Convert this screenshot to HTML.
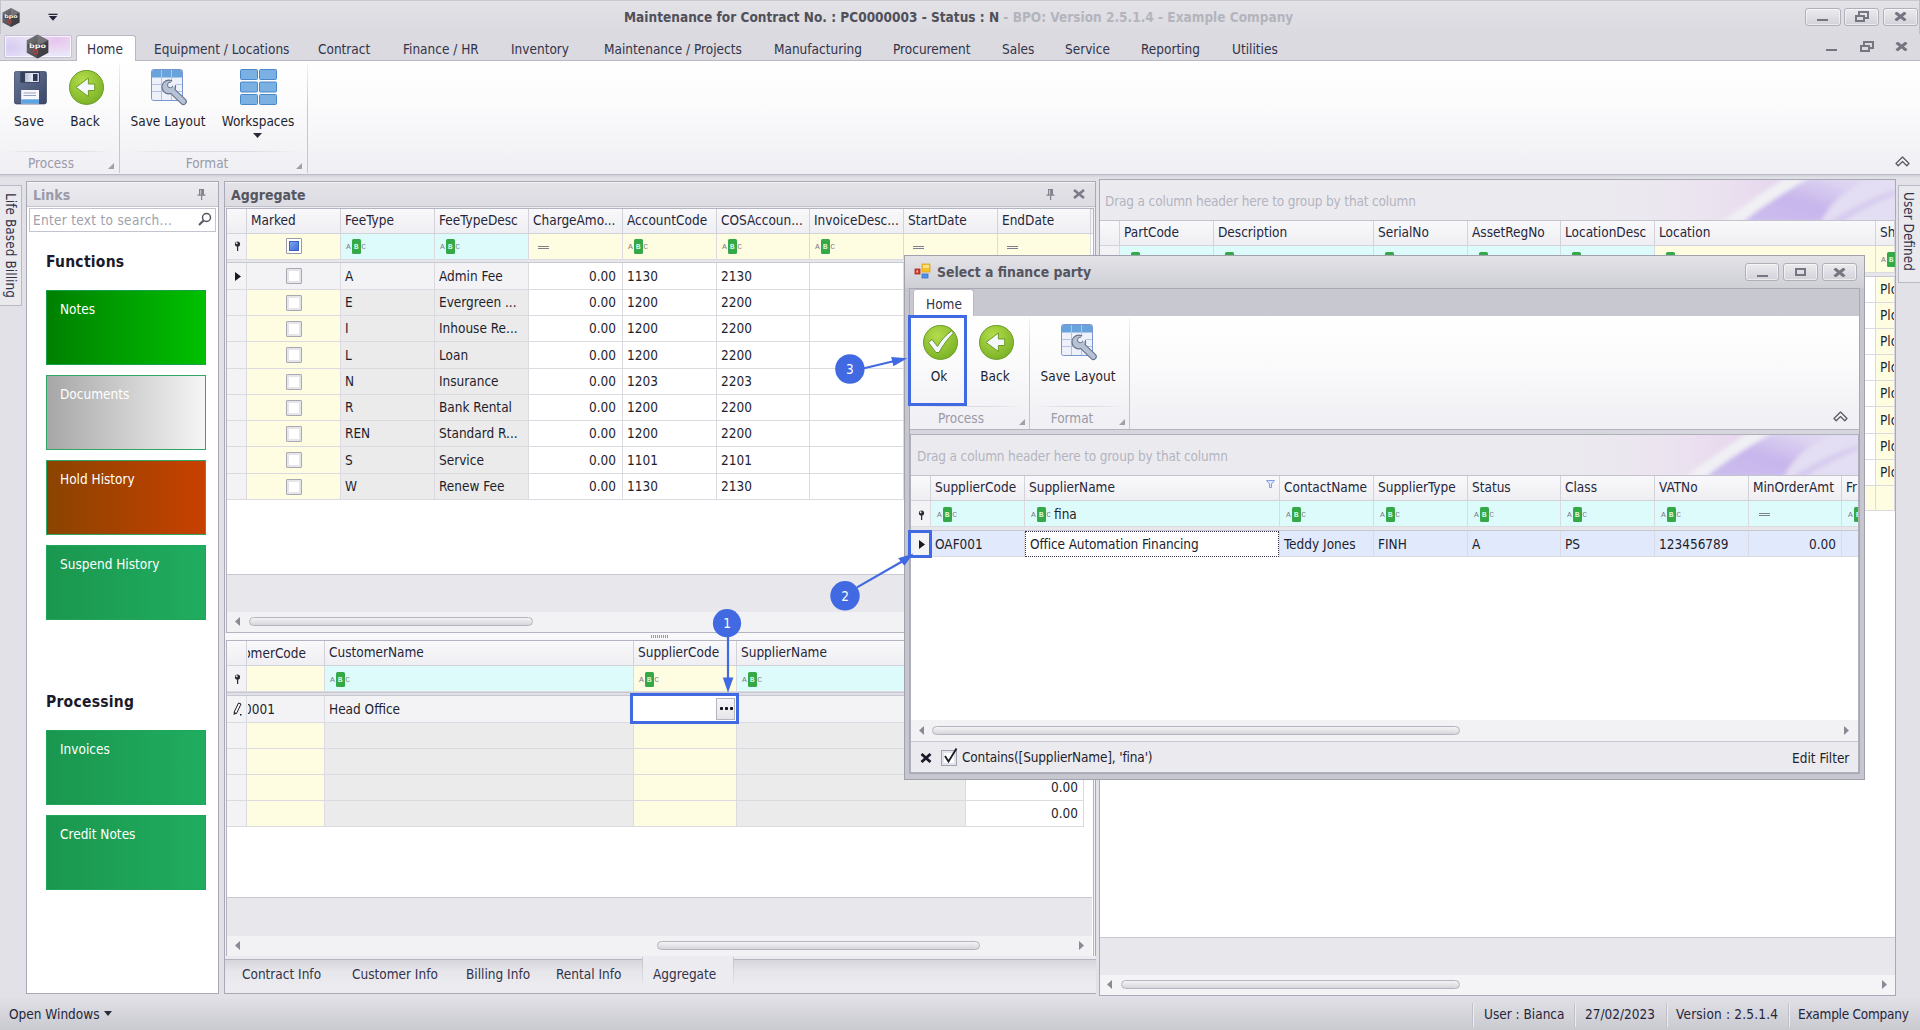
<!DOCTYPE html><html><head><meta charset="utf-8"><title>Maintenance for Contract</title><style>
*{box-sizing:border-box;margin:0;padding:0}
html,body{width:1920px;height:1030px;overflow:hidden;background:#e3e3e8}
body{font-family:"DejaVu Sans Condensed","Liberation Sans",sans-serif;font-size:13.5px;color:#1e1e2d;position:relative}
.a{position:absolute}
.t{position:absolute;white-space:nowrap;line-height:16px}
.hdr{position:absolute;background:linear-gradient(#f9f9fb,#efeff3);border-right:1px solid #d2d2da;border-bottom:1px solid #d2d2da;white-space:nowrap;overflow:hidden;padding-left:4px;color:#26263a}
.c{position:absolute;white-space:nowrap;overflow:hidden;padding-left:4px;border-right:1px solid #dadae0;border-bottom:1px solid #dadae0}
.r{text-align:right;padding-right:9px;padding-left:0}
.cy{background:#defbfc}
.ye{background:#fffde1}
.gr{background:#ebebeb}
.wh{background:#fff}
.ind{background:#f3f3f6}
.abc{position:absolute;font-family:"Liberation Mono",monospace;font-size:8px;font-weight:normal;color:#7e7e88;line-height:10px;white-space:nowrap;letter-spacing:-.4px}
.abc b{background:#35a847;color:#d8f6dc;border-radius:1.5px;padding:3px 2px 3px 1.8px;margin:0 .8px 0 1.5px;letter-spacing:0}
.eq{position:absolute;width:11px;height:3px;border-top:1px solid #80808c;border-bottom:1px solid #80808c}
.cb{position:absolute;width:16px;height:16px;border:1px solid #a9a9b4;background:#fff;box-shadow:inset 0 0 0 2px #e6e6ea;border-radius:1px}
.tile{position:absolute;left:46px;width:160px;height:75px;color:#fff;padding:10px 0 0 13px;font-size:13.5px}
.wbtn{position:absolute;top:8px;width:35px;height:18px;border:1px solid #b0b0ba;border-radius:3px;background:linear-gradient(#ebebef,#d2d2d9);box-shadow:inset 0 0 0 1px rgba(255,255,255,.55)}
.sb{position:absolute;height:9px;border:1px solid #b4b4be;border-radius:5px;background:linear-gradient(#f4f4f6,#d6d6dc)}
</style></head><body>
<div class="a" style="left:0px;top:0px;width:1920px;height:34px;background:linear-gradient(#e2e2e7,#dadae0)"></div>
<div class="a" style="left:0px;top:0px;width:1920px;height:1px;background:#c9c9d1"></div>
<svg class="a" style="left:2px;top:7px" width="18" height="21" viewBox="0 0 20 22"><defs><linearGradient id="hx1" x1="0" y1="0" x2="1" y2="1"><stop offset="0" stop-color="#7c7c80"/><stop offset=".5" stop-color="#58585c"/><stop offset="1" stop-color="#444448"/></linearGradient></defs><polygon points="10,0.500 19.500,5.500 19.500,16.500 10,21.500 0.500,16.500 0.500,5.500" fill="url(#hx1)"/><polygon points="10,0.500 19.500,5.500 10,11 " fill="#8a8a8e" opacity=".55"/><polygon points="10,11 19.500,5.500 19.500,16.500 10,21.500" fill="#2e2e32" opacity=".45"/><rect x="1.500" y="8.600" width="17" height="3.600" fill="#3a3a3e" opacity=".7"/><text x="10" y="12" text-anchor="middle" font-family="DejaVu Sans, Liberation Sans, sans-serif" font-weight="bold" font-size="5.5" fill="#f2f2f4" textLength="15" lengthAdjust="spacingAndGlyphs">bpo</text><circle cx="8.200" cy="15.600" r="1.900" fill="none" stroke="#c43a36" stroke-width="1.100"/></svg>
<svg class="a" style="left:48px;top:13px" width="10" height="8" viewBox="0 0 10 8"><rect x="0.500" y="0.700" width="9" height="1.300" fill="#24243a"/><polygon points="0.800,3 9.200,3 5,7.800" fill="#24243a"/></svg>
<div class="a" style="left:0px;top:0px;width:1px;height:34px;background:#c4c4cc"></div>
<div class="t" style="left:624px;top:9px;font-weight:bold;font-size:13.5px;line-height:17px;color:#50505a;letter-spacing:.02px">Maintenance for Contract No. : PC0000003 - Status : N<span style="color:#b4b4bd"> - BPO: Version 2.5.1.4 - Example Company</span></div>
<div class="wbtn" style="left:1805px;width:36px"></div>
<div class="wbtn" style="left:1844px;width:35px"></div>
<div class="wbtn" style="left:1883px;width:35px"></div>
<div class="a" style="left:1817px;top:19px;width:11px;height:2px;background:#767682"></div>
<svg class="a" style="left:1855px;top:11px" width="14" height="11" viewBox="0 0 14 11"><rect x="4" y="1" width="9" height="6" fill="none" stroke="#767682" stroke-width="2"/><rect x="1" y="5" width="8" height="5" fill="#dcdce2" stroke="#767682" stroke-width="2"/></svg>
<svg class="a" style="left:1894px;top:12px" width="13" height="9" viewBox="0 0 13 9"><path d="M1.500 .5L11.500 8.500M11.500 .5L1.500 8.500" stroke="#767682" stroke-width="3"/></svg>
<div class="a" style="left:1919px;top:0px;width:1px;height:61px;background:#c0c0c8"></div>
<div class="a" style="left:0px;top:34px;width:1920px;height:27px;background:#dadae0"></div>
<div class="a" style="left:0px;top:60px;width:1920px;height:1px;background:#b9b9c4"></div>
<div class="a" style="left:4px;top:35px;width:68px;height:23px;background:radial-gradient(ellipse 30px 14px at 78% 20%,#e6c4ec,rgba(230,196,236,0) 100%),radial-gradient(ellipse 26px 16px at 8% 55%,#d6ccf0,rgba(214,204,240,0) 100%),linear-gradient(#ece2f6,#e9e6f9);border:1px solid #c6c2d6;border-radius:2px;box-shadow:inset 0 0 0 1px rgba(255,255,255,.7)"></div>
<svg class="a" style="left:26px;top:34px" width="23" height="25" viewBox="0 0 20 22"><defs><linearGradient id="hx2" x1="0" y1="0" x2="1" y2="1"><stop offset="0" stop-color="#7c7c80"/><stop offset=".5" stop-color="#58585c"/><stop offset="1" stop-color="#444448"/></linearGradient></defs><polygon points="10,0.500 19.500,5.500 19.500,16.500 10,21.500 0.500,16.500 0.500,5.500" fill="url(#hx2)"/><polygon points="10,0.500 19.500,5.500 10,11 " fill="#8a8a8e" opacity=".55"/><polygon points="10,11 19.500,5.500 19.500,16.500 10,21.500" fill="#2e2e32" opacity=".45"/><rect x="1.500" y="8.600" width="17" height="3.600" fill="#3a3a3e" opacity=".7"/><text x="10" y="12" text-anchor="middle" font-family="DejaVu Sans, Liberation Sans, sans-serif" font-weight="bold" font-size="5.5" fill="#f2f2f4" textLength="15" lengthAdjust="spacingAndGlyphs">bpo</text><circle cx="8.200" cy="15.600" r="1.900" fill="none" stroke="#c43a36" stroke-width="1.100"/></svg>
<div class="a" style="left:76px;top:35px;width:60px;height:27px;background:#fff;border:1px solid #b9b9c4;border-bottom:none;border-radius:3px 3px 0 0"></div>
<div class="t " style="left:87px;top:41px;color:#33334a">Home</div>
<div class="t " style="left:154px;top:41px;color:#33334a">Equipment / Locations</div>
<div class="t " style="left:318px;top:41px;color:#33334a">Contract</div>
<div class="t " style="left:403px;top:41px;color:#33334a">Finance / HR</div>
<div class="t " style="left:511px;top:41px;color:#33334a">Inventory</div>
<div class="t " style="left:604px;top:41px;color:#33334a">Maintenance / Projects</div>
<div class="t " style="left:774px;top:41px;color:#33334a">Manufacturing</div>
<div class="t " style="left:893px;top:41px;color:#33334a">Procurement</div>
<div class="t " style="left:1002px;top:41px;color:#33334a">Sales</div>
<div class="t " style="left:1065px;top:41px;color:#33334a">Service</div>
<div class="t " style="left:1141px;top:41px;color:#33334a">Reporting</div>
<div class="t " style="left:1232px;top:41px;color:#33334a">Utilities</div>
<div class="a" style="left:1826px;top:49px;width:11px;height:2px;background:#767682"></div>
<svg class="a" style="left:1860px;top:41px" width="14" height="11" viewBox="0 0 14 11"><rect x="4" y="1" width="9" height="6" fill="none" stroke="#767682" stroke-width="2"/><rect x="1" y="5" width="8" height="5" fill="#dadae0" stroke="#767682" stroke-width="2"/></svg>
<svg class="a" style="left:1895px;top:42px" width="13" height="9" viewBox="0 0 13 9"><path d="M1.500 .5L11.500 8.500M11.500 .5L1.500 8.500" stroke="#767682" stroke-width="3"/></svg>
<div class="a" style="left:0px;top:61px;width:1920px;height:114px;background:linear-gradient(#ffffff,#fbfbfc 40%,#efeff4);border-bottom:1px solid #b9b9c4"></div>
<div class="a" style="left:119px;top:63px;width:1px;height:110px;background:linear-gradient(#f4f4f6,#c6c6d0 40%,#c6c6d0)"></div>
<div class="a" style="left:307px;top:63px;width:1px;height:110px;background:linear-gradient(#f4f4f6,#c6c6d0 40%,#c6c6d0)"></div>
<div class="a" style="left:6px;top:151px;width:106px;height:1px;background:linear-gradient(90deg,#f4f4f6,#dcdce2 30%,#dcdce2 70%,#f4f4f6)"></div>
<div class="a" style="left:126px;top:151px;width:176px;height:1px;background:linear-gradient(90deg,#f4f4f6,#dcdce2 30%,#dcdce2 70%,#f4f4f6)"></div>
<div class="t" style="left:-71px;width:200px;text-align:center;top:113px;">Save</div>
<div class="t" style="left:-15px;width:200px;text-align:center;top:113px;">Back</div>
<div class="t" style="left:68px;width:200px;text-align:center;top:113px;">Save Layout</div>
<div class="t" style="left:158px;width:200px;text-align:center;top:113px;">Workspaces</div>
<div class="t" style="left:-49px;width:200px;text-align:center;top:155px;color:#9a9aa8">Process</div>
<div class="t" style="left:107px;width:200px;text-align:center;top:155px;color:#9a9aa8">Format</div>
<svg class="a" style="left:253px;top:133px" width="9" height="5"><polygon points="0,0 9,0 4.5,5" fill="#2a2a3a"/></svg>
<svg class="a" style="left:108px;top:163px" width="6" height="6"><polygon points="6,0 6,6 0,6" fill="#a0a0ac"/></svg>
<svg class="a" style="left:296px;top:163px" width="6" height="6"><polygon points="6,0 6,6 0,6" fill="#a0a0ac"/></svg>
<svg class="a" style="left:14px;top:71px" width="33" height="34" viewBox="0 0 33 34"><defs><linearGradient id="sv1" x1="0" y1="0" x2="1" y2="1"><stop offset="0" stop-color="#6a7897"/><stop offset=".5" stop-color="#515e80"/><stop offset="1" stop-color="#3c486a"/></linearGradient><linearGradient id="sp1" x1="0" y1="0" x2="1" y2="0"><stop offset="0" stop-color="#b4bfd4"/><stop offset=".5" stop-color="#e4e8f2"/><stop offset="1" stop-color="#c8d0e0"/></linearGradient></defs><rect x=".4" y=".4" width="32" height="32.500" rx="2" fill="url(#sv1)" stroke="#36415f" stroke-width=".8"/><rect x="6.300" y=".8" width="19.700" height="11" rx="1" fill="#363f5a"/><rect x="11" y="2" width="14" height="9" fill="url(#sp1)"/><rect x="19" y="3" width="4.500" height="7" fill="#2c3552"/><rect x="7.200" y="19" width="17.800" height="13.600" fill="#f6f8fc"/><rect x="7.200" y="28.300" width="17.800" height="4.300" fill="#5fa3e0"/><rect x="9.500" y="21.500" width="12.500" height="1" fill="#93a0c4"/><rect x="9.500" y="24" width="12.500" height="1" fill="#93a0c4"/></svg>
<svg class="a" style="left:69px;top:70px" width="36" height="36" viewBox="0 0 36 36"><defs><radialGradient id="bk1" cx=".4" cy=".3" r=".8"><stop offset="0" stop-color="#b4dc4c"/><stop offset="1" stop-color="#76ae22"/></radialGradient></defs><circle cx="17.500" cy="17.400" r="17" fill="url(#bk1)" stroke="#6a9c22" stroke-width="1"/><path d="M7 17.400L19.400 8V14h6.300v6.500H19.400v6z" fill="#f4f7fb" stroke="#6a9c22" stroke-width="1"/></svg>
<svg class="a" style="left:151px;top:69px" width="37" height="37" viewBox="0 0 37 37"><rect x=".5" y=".5" width="31" height="31" rx="2" fill="#eef1fa" stroke="#7a96d0"/><path d="M1 2.500a1.500 1.500 0 0 1 1.500-1.500h27a1.500 1.500 0 0 1 1.500 1.500V8.500H1z" fill="#69a3dc"/><path d="M1 15.500h30M1 22.500h30M10.500 1v30M20.500 1v30" stroke="#b4c2e4" stroke-width="1"/><g transform="translate(.8,1.500)"><path d="M20 20L31.500 31" stroke="#66748c" stroke-width="7" stroke-linecap="round"/><circle cx="17" cy="16.500" r="6.800" fill="#b6c2d4" stroke="#66748c" stroke-width="1.200"/><path d="M20 20L31.500 31" stroke="#b6c2d4" stroke-width="4.800" stroke-linecap="round"/><path d="M17.500 17.500L21.500 9L26 11.500Z" fill="#eef1fa"/><circle cx="18.500" cy="14.500" r="2.800" fill="#eef1fa" stroke="#66748c" stroke-width="1"/><path d="M19 12L22.500 8.500L26 12L21.500 16.500Z" fill="#eef1fa"/></g></svg>
<svg class="a" style="left:240px;top:69px" width="37" height="36" viewBox="0 0 37 36"><rect x="0.5" y="0.5" width="17" height="10" rx="1" fill="#7ab0e2" stroke="#4a88cc"/><rect x="19.5" y="0.5" width="17" height="10" rx="1" fill="#7ab0e2" stroke="#4a88cc"/><rect x="0.5" y="13.0" width="17" height="10" rx="1" fill="#7ab0e2" stroke="#4a88cc"/><rect x="19.5" y="13.0" width="17" height="10" rx="1" fill="#7ab0e2" stroke="#4a88cc"/><rect x="0.5" y="25.5" width="17" height="10" rx="1" fill="#7ab0e2" stroke="#4a88cc"/><rect x="19.5" y="25.5" width="17" height="10" rx="1" fill="#7ab0e2" stroke="#4a88cc"/></svg>
<svg class="a" style="left:1895px;top:156px" width="15" height="11" viewBox="0 0 15 11"><path d="M7.500 1L14 7.500L11.800 9.800L7.500 5.500L3.200 9.800L1 7.500Z" fill="#f4f4f7" stroke="#5a5a66" stroke-width="1.300" stroke-linejoin="round"/></svg>
<div class="a" style="left:0px;top:175px;width:1920px;height:823px;background:#e1e1e7"></div>
<div class="a" style="left:0px;top:175px;width:1920px;height:3px;background:linear-gradient(#d0d0d8,#e1e1e7)"></div>
<div class="a" style="left:0px;top:185px;width:22px;height:121px;background:#e9e9ee;border:1px solid #b9b9c4;border-left:none"></div>
<div class="t" style="left:1px;top:193px;width:20px;height:110px;writing-mode:vertical-rl;line-height:20px;color:#33334a;letter-spacing:.05px">Life Based Billing</div>
<div class="a" style="left:1898px;top:185px;width:22px;height:98px;background:#e9e9ee;border:1px solid #b9b9c4;border-right:none"></div>
<div class="t" style="left:1899px;top:192px;width:20px;height:92px;writing-mode:vertical-rl;line-height:20px;color:#33334a">User Defined</div>
<div class="a" style="left:26px;top:181px;width:193px;height:813px;background:#fff;border:1px solid #a9a9b6"></div>
<div class="a" style="left:27px;top:182px;width:191px;height:25px;background:linear-gradient(#ececf0,#e3e3e8);border-bottom:1px solid #c4c4ce;border-top:1px solid #f6f6f8"></div>
<div class="t " style="left:33px;top:187px;font-weight:bold;color:#9a9aa8;font-size:14px">Links</div>
<svg class="a" style="left:197px;top:189px" width="9" height="11" viewBox="0 0 9 11"><path d="M2 0h5v5.500h1.500v1.200h-8v-1.200H2z" fill="#82828e"/><rect x="3" y="1" width="1.200" height="4.500" fill="#c4c4cc"/><rect x="4" y="6.500" width="1.200" height="4.500" fill="#82828e"/></svg>
<div class="a" style="left:29px;top:208px;width:187px;height:24px;background:#fff;border:1px solid #c4c4ce"></div>
<div class="t " style="left:33px;top:212px;color:#a0a0ac;letter-spacing:.3px">Enter text to search...</div>
<svg class="a" style="left:198px;top:212px" width="14" height="14" viewBox="0 0 14 14"><circle cx="8.500" cy="5.500" r="4" fill="none" stroke="#55555f" stroke-width="1.500"/><path d="M5.500 8.500L1 13" stroke="#55555f" stroke-width="2"/></svg>
<div class="t " style="left:46px;top:252px;font-weight:bold;font-size:15.5px;line-height:20px;color:#1a1a2a;letter-spacing:.25px">Functions</div>
<div class="t " style="left:46px;top:692px;font-weight:bold;font-size:15.5px;line-height:20px;color:#1a1a2a;letter-spacing:.25px">Processing</div>
<div class="tile" style="top:290px;background:linear-gradient(90deg,#008000,#00c000);border:1px solid #19a04a">Notes</div>
<div class="tile" style="top:375px;background:linear-gradient(90deg,#a6a6a6,#f6f6f6);border:1px solid #2fa866;">Documents</div>
<div class="tile" style="top:460px;background:linear-gradient(90deg,#8a4400,#c84000);border:1px solid #2fa866">Hold History</div>
<div class="tile" style="top:545px;background:linear-gradient(90deg,#1a974e,#20ad5f);border:1px solid #1fa65a">Suspend History</div>
<div class="tile" style="top:730px;background:linear-gradient(90deg,#1a974e,#20ad5f);border:1px solid #1fa65a">Invoices</div>
<div class="tile" style="top:815px;background:linear-gradient(90deg,#1a974e,#20ad5f);border:1px solid #1fa65a">Credit Notes</div>
<div class="a" style="left:224px;top:181px;width:872px;height:813px;background:#f0f0f4;border:1px solid #a9a9b6"></div>
<div class="a" style="left:225px;top:182px;width:870px;height:25px;background:linear-gradient(#e2e2e7,#dcdce2);border-bottom:1px solid #c0c0ca;border-top:1px solid #f4f4f6"></div>
<div class="t " style="left:231px;top:187px;font-weight:bold;color:#55555f;font-size:14px">Aggregate</div>
<svg class="a" style="left:1046px;top:189px" width="9" height="11" viewBox="0 0 9 11"><path d="M2 0h5v5.500h1.500v1.200h-8v-1.200H2z" fill="#82828e"/><rect x="3" y="1" width="1.200" height="4.500" fill="#c4c4cc"/><rect x="4" y="6.500" width="1.200" height="4.500" fill="#82828e"/></svg>
<svg class="a" style="left:1073px;top:189px" width="12" height="10" viewBox="0 0 12 10"><path d="M1 1L11 9M11 1L1 9" stroke="#7c7c88" stroke-width="2.600"/></svg>
<div class="a" style="left:226px;top:208px;width:868px;height:425px;background:#fff;border:1px solid #b4b4c0"></div>
<div class="hdr" style="left:227px;top:209px;width:20px;height:25px;line-height:23px"></div>
<div class="hdr" style="left:247px;top:209px;width:94px;height:25px;line-height:23px">Marked</div>
<div class="hdr" style="left:341px;top:209px;width:94px;height:25px;line-height:23px">FeeType</div>
<div class="hdr" style="left:435px;top:209px;width:94px;height:25px;line-height:23px">FeeTypeDesc</div>
<div class="hdr" style="left:529px;top:209px;width:94px;height:25px;line-height:23px">ChargeAmo...</div>
<div class="hdr" style="left:623px;top:209px;width:94px;height:25px;line-height:23px">AccountCode</div>
<div class="hdr" style="left:717px;top:209px;width:93px;height:25px;line-height:23px">COSAccoun...</div>
<div class="hdr" style="left:810px;top:209px;width:94px;height:25px;line-height:23px">InvoiceDesc...</div>
<div class="hdr" style="left:904px;top:209px;width:94px;height:25px;line-height:23px">StartDate</div>
<div class="hdr" style="left:998px;top:209px;width:93px;height:25px;line-height:23px">EndDate</div>
<div class="a" style="left:1091px;top:209px;width:2px;height:25px;background:#f3f3f6;border-bottom:1px solid #d2d2da"></div>
<div class="c ind" style="left:227px;top:234px;width:20px;height:26px"></div>
<div class="c ye" style="left:247px;top:234px;width:94px;height:26px"></div>
<div class="c cy" style="left:341px;top:234px;width:94px;height:26px"></div>
<div class="c cy" style="left:435px;top:234px;width:94px;height:26px"></div>
<div class="c ye" style="left:529px;top:234px;width:94px;height:26px"></div>
<div class="c ye" style="left:623px;top:234px;width:94px;height:26px"></div>
<div class="c ye" style="left:717px;top:234px;width:93px;height:26px"></div>
<div class="c ye" style="left:810px;top:234px;width:94px;height:26px"></div>
<div class="c ye" style="left:904px;top:234px;width:94px;height:26px"></div>
<div class="c ye" style="left:998px;top:234px;width:93px;height:26px"></div>
<svg class="a" style="left:234px;top:241px" width="7" height="10" viewBox="0 0 7 10"><circle cx="3.500" cy="3" r="2.600" fill="#2a2a36"/><circle cx="2.700" cy="2.200" r="1" fill="#e8e8ee"/><rect x="3" y="5" width="1.200" height="5" fill="#2a2a36"/></svg>
<div class="cb" style="left:286px;top:238px;box-shadow:none;border-color:#9a9aa6"><div class="a" style="left:2px;top:2px;width:10px;height:10px;background:linear-gradient(135deg,#7fa4ee,#3f6fd8);border:1px solid #3a62c0"></div></div>
<div class="abc" style="left:346px;top:242px">A<b>B</b>C</div>
<div class="abc" style="left:440px;top:242px">A<b>B</b>C</div>
<div class="abc" style="left:628px;top:242px">A<b>B</b>C</div>
<div class="abc" style="left:722px;top:242px">A<b>B</b>C</div>
<div class="abc" style="left:815px;top:242px">A<b>B</b>C</div>
<div class="eq" style="left:538px;top:246px"></div>
<div class="eq" style="left:913px;top:246px"></div>
<div class="eq" style="left:1007px;top:246px"></div>
<div class="a" style="left:227px;top:260px;width:865px;height:3px;background:#e6e6eb;border-bottom:1px solid #c8c8d2"></div>
<div class="c ind" style="left:227px;top:263px;width:20px;height:27px"></div>
<div class="c ind" style="left:247px;top:263px;width:94px;height:27px"></div>
<div class="cb" style="left:286px;top:268px"></div>
<div class="c ind" style="left:341px;top:263px;width:94px;height:27px;line-height:26px">A</div>
<div class="c ind" style="left:435px;top:263px;width:94px;height:27px;line-height:26px">Admin Fee</div>
<div class="c wh r" style="left:529px;top:263px;width:94px;height:27px;line-height:26px;padding-right:6px">0.00</div>
<div class="c wh" style="left:623px;top:263px;width:94px;height:27px;line-height:26px">1130</div>
<div class="c wh" style="left:717px;top:263px;width:93px;height:27px;line-height:26px">2130</div>
<div class="c wh" style="left:810px;top:263px;width:94px;height:27px"></div>
<div class="c wh" style="left:904px;top:263px;width:94px;height:27px"></div>
<div class="c wh" style="left:998px;top:263px;width:93px;height:27px"></div>
<div class="c ind" style="left:227px;top:290px;width:20px;height:26px"></div>
<div class="c ye" style="left:247px;top:290px;width:94px;height:26px"></div>
<div class="cb" style="left:286px;top:295px"></div>
<div class="c gr" style="left:341px;top:290px;width:94px;height:26px;line-height:25px">E</div>
<div class="c gr" style="left:435px;top:290px;width:94px;height:26px;line-height:25px">Evergreen ...</div>
<div class="c wh r" style="left:529px;top:290px;width:94px;height:26px;line-height:25px;padding-right:6px">0.00</div>
<div class="c wh" style="left:623px;top:290px;width:94px;height:26px;line-height:25px">1200</div>
<div class="c wh" style="left:717px;top:290px;width:93px;height:26px;line-height:25px">2200</div>
<div class="c wh" style="left:810px;top:290px;width:94px;height:26px"></div>
<div class="c wh" style="left:904px;top:290px;width:94px;height:26px"></div>
<div class="c wh" style="left:998px;top:290px;width:93px;height:26px"></div>
<div class="c ind" style="left:227px;top:316px;width:20px;height:26px"></div>
<div class="c ye" style="left:247px;top:316px;width:94px;height:26px"></div>
<div class="cb" style="left:286px;top:321px"></div>
<div class="c gr" style="left:341px;top:316px;width:94px;height:26px;line-height:25px">I</div>
<div class="c gr" style="left:435px;top:316px;width:94px;height:26px;line-height:25px">Inhouse Re...</div>
<div class="c wh r" style="left:529px;top:316px;width:94px;height:26px;line-height:25px;padding-right:6px">0.00</div>
<div class="c wh" style="left:623px;top:316px;width:94px;height:26px;line-height:25px">1200</div>
<div class="c wh" style="left:717px;top:316px;width:93px;height:26px;line-height:25px">2200</div>
<div class="c wh" style="left:810px;top:316px;width:94px;height:26px"></div>
<div class="c wh" style="left:904px;top:316px;width:94px;height:26px"></div>
<div class="c wh" style="left:998px;top:316px;width:93px;height:26px"></div>
<div class="c ind" style="left:227px;top:342px;width:20px;height:27px"></div>
<div class="c ye" style="left:247px;top:342px;width:94px;height:27px"></div>
<div class="cb" style="left:286px;top:347px"></div>
<div class="c gr" style="left:341px;top:342px;width:94px;height:27px;line-height:26px">L</div>
<div class="c gr" style="left:435px;top:342px;width:94px;height:27px;line-height:26px">Loan</div>
<div class="c wh r" style="left:529px;top:342px;width:94px;height:27px;line-height:26px;padding-right:6px">0.00</div>
<div class="c wh" style="left:623px;top:342px;width:94px;height:27px;line-height:26px">1200</div>
<div class="c wh" style="left:717px;top:342px;width:93px;height:27px;line-height:26px">2200</div>
<div class="c wh" style="left:810px;top:342px;width:94px;height:27px"></div>
<div class="c wh" style="left:904px;top:342px;width:94px;height:27px"></div>
<div class="c wh" style="left:998px;top:342px;width:93px;height:27px"></div>
<div class="c ind" style="left:227px;top:369px;width:20px;height:26px"></div>
<div class="c ye" style="left:247px;top:369px;width:94px;height:26px"></div>
<div class="cb" style="left:286px;top:374px"></div>
<div class="c gr" style="left:341px;top:369px;width:94px;height:26px;line-height:25px">N</div>
<div class="c gr" style="left:435px;top:369px;width:94px;height:26px;line-height:25px">Insurance</div>
<div class="c wh r" style="left:529px;top:369px;width:94px;height:26px;line-height:25px;padding-right:6px">0.00</div>
<div class="c wh" style="left:623px;top:369px;width:94px;height:26px;line-height:25px">1203</div>
<div class="c wh" style="left:717px;top:369px;width:93px;height:26px;line-height:25px">2203</div>
<div class="c wh" style="left:810px;top:369px;width:94px;height:26px"></div>
<div class="c wh" style="left:904px;top:369px;width:94px;height:26px"></div>
<div class="c wh" style="left:998px;top:369px;width:93px;height:26px"></div>
<div class="c ind" style="left:227px;top:395px;width:20px;height:26px"></div>
<div class="c ye" style="left:247px;top:395px;width:94px;height:26px"></div>
<div class="cb" style="left:286px;top:400px"></div>
<div class="c gr" style="left:341px;top:395px;width:94px;height:26px;line-height:25px">R</div>
<div class="c gr" style="left:435px;top:395px;width:94px;height:26px;line-height:25px">Bank Rental</div>
<div class="c wh r" style="left:529px;top:395px;width:94px;height:26px;line-height:25px;padding-right:6px">0.00</div>
<div class="c wh" style="left:623px;top:395px;width:94px;height:26px;line-height:25px">1200</div>
<div class="c wh" style="left:717px;top:395px;width:93px;height:26px;line-height:25px">2200</div>
<div class="c wh" style="left:810px;top:395px;width:94px;height:26px"></div>
<div class="c wh" style="left:904px;top:395px;width:94px;height:26px"></div>
<div class="c wh" style="left:998px;top:395px;width:93px;height:26px"></div>
<div class="c ind" style="left:227px;top:421px;width:20px;height:26px"></div>
<div class="c ye" style="left:247px;top:421px;width:94px;height:26px"></div>
<div class="cb" style="left:286px;top:426px"></div>
<div class="c gr" style="left:341px;top:421px;width:94px;height:26px;line-height:25px">REN</div>
<div class="c gr" style="left:435px;top:421px;width:94px;height:26px;line-height:25px">Standard R...</div>
<div class="c wh r" style="left:529px;top:421px;width:94px;height:26px;line-height:25px;padding-right:6px">0.00</div>
<div class="c wh" style="left:623px;top:421px;width:94px;height:26px;line-height:25px">1200</div>
<div class="c wh" style="left:717px;top:421px;width:93px;height:26px;line-height:25px">2200</div>
<div class="c wh" style="left:810px;top:421px;width:94px;height:26px"></div>
<div class="c wh" style="left:904px;top:421px;width:94px;height:26px"></div>
<div class="c wh" style="left:998px;top:421px;width:93px;height:26px"></div>
<div class="c ind" style="left:227px;top:447px;width:20px;height:27px"></div>
<div class="c ye" style="left:247px;top:447px;width:94px;height:27px"></div>
<div class="cb" style="left:286px;top:452px"></div>
<div class="c gr" style="left:341px;top:447px;width:94px;height:27px;line-height:26px">S</div>
<div class="c gr" style="left:435px;top:447px;width:94px;height:27px;line-height:26px">Service</div>
<div class="c wh r" style="left:529px;top:447px;width:94px;height:27px;line-height:26px;padding-right:6px">0.00</div>
<div class="c wh" style="left:623px;top:447px;width:94px;height:27px;line-height:26px">1101</div>
<div class="c wh" style="left:717px;top:447px;width:93px;height:27px;line-height:26px">2101</div>
<div class="c wh" style="left:810px;top:447px;width:94px;height:27px"></div>
<div class="c wh" style="left:904px;top:447px;width:94px;height:27px"></div>
<div class="c wh" style="left:998px;top:447px;width:93px;height:27px"></div>
<div class="c ind" style="left:227px;top:474px;width:20px;height:26px"></div>
<div class="c ye" style="left:247px;top:474px;width:94px;height:26px"></div>
<div class="cb" style="left:286px;top:479px"></div>
<div class="c gr" style="left:341px;top:474px;width:94px;height:26px;line-height:25px">W</div>
<div class="c gr" style="left:435px;top:474px;width:94px;height:26px;line-height:25px">Renew Fee</div>
<div class="c wh r" style="left:529px;top:474px;width:94px;height:26px;line-height:25px;padding-right:6px">0.00</div>
<div class="c wh" style="left:623px;top:474px;width:94px;height:26px;line-height:25px">1130</div>
<div class="c wh" style="left:717px;top:474px;width:93px;height:26px;line-height:25px">2130</div>
<div class="c wh" style="left:810px;top:474px;width:94px;height:26px"></div>
<div class="c wh" style="left:904px;top:474px;width:94px;height:26px"></div>
<div class="c wh" style="left:998px;top:474px;width:93px;height:26px"></div>
<svg class="a" style="left:235px;top:272px" width="6" height="9" viewBox="0 0 6 9"><polygon points="0,0 6,4.500 0,9" fill="#1a1a24"/></svg>
<div class="a" style="left:227px;top:574px;width:865px;height:38px;background:#e8e8ec;border-top:1px solid #c8c8d2"></div>
<div class="a" style="left:227px;top:612px;width:865px;height:20px;background:#f2f2f5"></div>
<svg class="a" style="left:235px;top:617px" width="5" height="9"><polygon points="5,0 5,9 0,4.500" fill="#8a8a96"/></svg>
<div class="sb" style="left:249px;top:617px;width:284px"></div>
<div class="a" style="left:225px;top:633px;width:871px;height:7px;background:#f8f8fa"></div>
<div class="a" style="left:651px;top:635px;width:18px;height:3px;background:repeating-linear-gradient(90deg,#9a9aa6 0 1px,transparent 1px 2px)"></div>
<div class="a" style="left:226px;top:640px;width:868px;height:317px;background:#fff;border:1px solid #b4b4c0"></div>
<div class="hdr" style="left:227px;top:641px;width:20px;height:25px;line-height:23px;"></div>
<div class="hdr" style="left:247px;top:641px;width:78px;height:25px;line-height:23px;"></div>
<div class="hdr" style="left:325px;top:641px;width:309px;height:25px;line-height:23px;">CustomerName</div>
<div class="hdr" style="left:634px;top:641px;width:103px;height:25px;line-height:23px;">SupplierCode</div>
<div class="hdr" style="left:737px;top:641px;width:229px;height:25px;line-height:23px;">SupplierName</div>
<div class="hdr" style="left:966px;top:641px;width:118px;height:25px;line-height:23px;"></div>
<div class="a" style="left:1084px;top:641px;width:8px;height:25px;background:#f3f3f6"></div>
<div class="a" style="left:248px;top:642px;width:70px;height:22px;overflow:hidden"><div class="t" style="right:12px;top:3px;color:#26263a">CustomerCode</div></div>
<div class="c ind" style="left:227px;top:666px;width:20px;height:26px"></div>
<div class="c ye" style="left:247px;top:666px;width:78px;height:26px"></div>
<div class="c cy" style="left:325px;top:666px;width:309px;height:26px"></div>
<div class="c ye" style="left:634px;top:666px;width:103px;height:26px"></div>
<div class="c cy" style="left:737px;top:666px;width:229px;height:26px"></div>
<div class="c cy" style="left:966px;top:666px;width:118px;height:26px"></div>
<svg class="a" style="left:234px;top:674px" width="7" height="10" viewBox="0 0 7 10"><circle cx="3.500" cy="3" r="2.600" fill="#2a2a36"/><circle cx="2.700" cy="2.200" r="1" fill="#e8e8ee"/><rect x="3" y="5" width="1.200" height="5" fill="#2a2a36"/></svg>
<div class="abc" style="left:330px;top:675px">A<b>B</b>C</div>
<div class="abc" style="left:639px;top:675px">A<b>B</b>C</div>
<div class="abc" style="left:742px;top:675px">A<b>B</b>C</div>
<div class="a" style="left:227px;top:692px;width:865px;height:4px;background:#e0e0e6;border-top:1px solid #c8c8d2;border-bottom:1px solid #c8c8d2"></div>
<div class="c ind" style="left:227px;top:696px;width:20px;height:27px"></div>
<div class="c ind" style="left:247px;top:696px;width:78px;height:27px;line-height:26px;padding-left:0"></div>
<div class="c ind" style="left:325px;top:696px;width:309px;height:27px;line-height:26px">Head Office</div>
<div class="c wh" style="left:634px;top:696px;width:103px;height:27px"></div>
<div class="c ind" style="left:737px;top:696px;width:229px;height:27px"></div>
<div class="c wh r" style="left:966px;top:696px;width:118px;height:27px;line-height:26px;padding-right:5px">0.00</div>
<div class="c ind" style="left:227px;top:723px;width:20px;height:26px"></div>
<div class="c ye" style="left:247px;top:723px;width:78px;height:26px;line-height:25px;padding-left:0"></div>
<div class="c gr" style="left:325px;top:723px;width:309px;height:26px;line-height:25px"></div>
<div class="c ye" style="left:634px;top:723px;width:103px;height:26px"></div>
<div class="c gr" style="left:737px;top:723px;width:229px;height:26px"></div>
<div class="c wh r" style="left:966px;top:723px;width:118px;height:26px;line-height:25px;padding-right:5px">0.00</div>
<div class="c ind" style="left:227px;top:749px;width:20px;height:26px"></div>
<div class="c ye" style="left:247px;top:749px;width:78px;height:26px;line-height:25px;padding-left:0"></div>
<div class="c gr" style="left:325px;top:749px;width:309px;height:26px;line-height:25px"></div>
<div class="c ye" style="left:634px;top:749px;width:103px;height:26px"></div>
<div class="c gr" style="left:737px;top:749px;width:229px;height:26px"></div>
<div class="c wh r" style="left:966px;top:749px;width:118px;height:26px;line-height:25px;padding-right:5px">0.00</div>
<div class="c ind" style="left:227px;top:775px;width:20px;height:26px"></div>
<div class="c ye" style="left:247px;top:775px;width:78px;height:26px;line-height:25px;padding-left:0"></div>
<div class="c gr" style="left:325px;top:775px;width:309px;height:26px;line-height:25px"></div>
<div class="c ye" style="left:634px;top:775px;width:103px;height:26px"></div>
<div class="c gr" style="left:737px;top:775px;width:229px;height:26px"></div>
<div class="c wh r" style="left:966px;top:775px;width:118px;height:26px;line-height:25px;padding-right:5px">0.00</div>
<div class="c ind" style="left:227px;top:801px;width:20px;height:26px"></div>
<div class="c ye" style="left:247px;top:801px;width:78px;height:26px;line-height:25px;padding-left:0"></div>
<div class="c gr" style="left:325px;top:801px;width:309px;height:26px;line-height:25px"></div>
<div class="c ye" style="left:634px;top:801px;width:103px;height:26px"></div>
<div class="c gr" style="left:737px;top:801px;width:229px;height:26px"></div>
<div class="c wh r" style="left:966px;top:801px;width:118px;height:26px;line-height:25px;padding-right:5px">0.00</div>
<div class="a" style="left:248px;top:698px;width:40px;height:22px;overflow:hidden"><div class="t" style="right:13px;top:3px">CUS0001</div></div>
<svg class="a" style="left:232px;top:702px" width="11" height="14" viewBox="0 0 11 14"><path d="M6.500 1L9 2L4.500 11.500L2 10.500Z" fill="#fff" stroke="#1a1a24" stroke-width="1"/><path d="M2 10.500L1.500 13L4.500 11.500Z" fill="#1a1a24"/><rect x="8" y="12" width="1.500" height="1.500" fill="#1a1a24"/></svg>
<div class="a" style="left:630px;top:693px;width:109px;height:31px;border:3px solid #4169e1;background:#fff"></div>
<div class="a" style="left:716px;top:698px;width:19px;height:22px;border:1px solid #b4b4be;background:linear-gradient(#f6f6f8,#e6e6ea)"></div>
<div class="a" style="left:719.5px;top:707px;width:3px;height:3px;background:#14141e;border-radius:.8px"></div>
<div class="a" style="left:724.5px;top:707px;width:3px;height:3px;background:#14141e;border-radius:.8px"></div>
<div class="a" style="left:729.5px;top:707px;width:3px;height:3px;background:#14141e;border-radius:.8px"></div>
<div class="a" style="left:227px;top:897px;width:865px;height:39px;background:#e8e8ec;border-top:1px solid #c8c8d2"></div>
<div class="a" style="left:227px;top:936px;width:865px;height:20px;background:#f2f2f5"></div>
<svg class="a" style="left:235px;top:941px" width="5" height="9"><polygon points="5,0 5,9 0,4.500" fill="#8a8a96"/></svg>
<svg class="a" style="left:1079px;top:941px" width="5" height="9"><polygon points="0,0 0,9 5,4.500" fill="#8a8a96"/></svg>
<div class="sb" style="left:657px;top:941px;width:323px"></div>
<div class="a" style="left:225px;top:956px;width:871px;height:37px;background:#ececf0"></div>
<div class="a" style="left:225px;top:959px;width:417px;height:1px;background:#b4b4c0"></div>
<div class="a" style="left:225px;top:960px;width:417px;height:26px;background:linear-gradient(#d6d6dc,#e6e6eb 45%,#ececf0)"></div>
<div class="a" style="left:734px;top:959px;width:362px;height:1px;background:#b4b4c0"></div>
<div class="a" style="left:734px;top:960px;width:362px;height:26px;background:linear-gradient(#d6d6dc,#e6e6eb 45%,#ececf0)"></div>
<div class="a" style="left:642px;top:957px;width:1px;height:31px;background:linear-gradient(#c4c4ce,#d8d8de 60%,#ececf0)"></div>
<div class="a" style="left:733px;top:957px;width:1px;height:31px;background:linear-gradient(#c4c4ce,#d8d8de 60%,#ececf0)"></div>
<div class="t " style="left:242px;top:966px;color:#33334a">Contract Info</div>
<div class="t " style="left:352px;top:966px;color:#33334a">Customer Info</div>
<div class="t " style="left:466px;top:966px;color:#33334a">Billing Info</div>
<div class="t " style="left:556px;top:966px;color:#33334a">Rental Info</div>
<div class="t " style="left:653px;top:966px;color:#33334a">Aggregate</div>
<div class="a" style="left:1099px;top:179px;width:797px;height:817px;background:#fff;border:1px solid #a9a9b6"></div>
<div class="a" style="left:1100px;top:180px;width:795px;height:41px;background:#ebebef;border-bottom:1px solid #c4c4ce"></div>
<svg class="a" style="left:1595px;top:180px" width="300" height="40" viewBox="0 0 300 40" preserveAspectRatio="none"><defs><linearGradient id="swa1" x1="0" y1="0" x2="1" y2="0"><stop offset="0" stop-color="#ecdcf0" stop-opacity="0"/><stop offset=".35" stop-color="#ecdcf0" stop-opacity=".45"/><stop offset=".6" stop-color="#e6d4ee" stop-opacity=".9"/><stop offset="1" stop-color="#e4def2"/></linearGradient><linearGradient id="swb1" x1="0" y1="1" x2="1" y2="0"><stop offset="0" stop-color="#cbbdee"/><stop offset=".45" stop-color="#c8b6ec"/><stop offset=".8" stop-color="#dcd3f1"/><stop offset="1" stop-color="#e2dcf3"/></linearGradient><filter id="swf1" x="-10%" y="-30%" width="120%" height="160%"><feGaussianBlur stdDeviation="2.200"/></filter></defs><rect width="300" height="40" fill="url(#swa1)"/><g filter="url(#swf1)"><path d="M126 42C150 26 170 10 190 -2H214C190 12 166 28 148 42Z" fill="#f0f0f4"/><path d="M148 42C170 24 196 8 216 -2H282C252 6 236 22 226 42Z" fill="url(#swb1)"/><path d="M226 42C238 22 254 6 282 -2H302V42Z" fill="#e3def3"/><path d="M234 42C256 28 280 16 302 10V14C282 22 262 32 248 42Z" fill="#d2c4ee" opacity=".8"/></g></svg>
<div class="t " style="left:1105px;top:193px;color:#b4b4c0;letter-spacing:-.15px">Drag a column header here to group by that column</div>
<div class="hdr" style="left:1100px;top:221px;width:20px;height:25px;line-height:23px"></div>
<div class="hdr" style="left:1120px;top:221px;width:94px;height:25px;line-height:23px">PartCode</div>
<div class="hdr" style="left:1214px;top:221px;width:160px;height:25px;line-height:23px">Description</div>
<div class="hdr" style="left:1374px;top:221px;width:94px;height:25px;line-height:23px">SerialNo</div>
<div class="hdr" style="left:1468px;top:221px;width:93px;height:25px;line-height:23px">AssetRegNo</div>
<div class="hdr" style="left:1561px;top:221px;width:94px;height:25px;line-height:23px">LocationDesc</div>
<div class="hdr" style="left:1655px;top:221px;width:221px;height:25px;line-height:23px">Location</div>
<div class="hdr" style="left:1876px;top:221px;width:19px;height:25px;line-height:23px">Sh</div>
<div class="c ind" style="left:1100px;top:246px;width:20px;height:27px"></div>
<div class="c cy" style="left:1120px;top:246px;width:94px;height:27px"></div>
<div class="c cy" style="left:1214px;top:246px;width:160px;height:27px"></div>
<div class="c cy" style="left:1374px;top:246px;width:94px;height:27px"></div>
<div class="c cy" style="left:1468px;top:246px;width:93px;height:27px"></div>
<div class="c cy" style="left:1561px;top:246px;width:94px;height:27px"></div>
<div class="c ye" style="left:1655px;top:246px;width:221px;height:27px"></div>
<div class="c ye" style="left:1876px;top:246px;width:19px;height:27px"></div>
<div class="abc" style="left:1125px;top:255px">A<b>B</b>C</div>
<div class="abc" style="left:1219px;top:255px">A<b>B</b>C</div>
<div class="abc" style="left:1379px;top:255px">A<b>B</b>C</div>
<div class="abc" style="left:1473px;top:255px">A<b>B</b>C</div>
<div class="abc" style="left:1566px;top:255px">A<b>B</b>C</div>
<div class="abc" style="left:1660px;top:255px">A<b>B</b>C</div>
<div class="a" style="left:1881px;top:251px;width:14px;height:18px;overflow:hidden"><div class="abc" style="left:0;top:4px">A<b>B</b>C</div></div>
<div class="a" style="left:1100px;top:273px;width:795px;height:4px;background:#e6e6eb;border-bottom:1px solid #c8c8d2"></div>
<div class="c ye" style="left:1876px;top:277px;width:19px;height:26px;line-height:25px">Plot</div>
<div class="c wh" style="left:1860px;top:277px;width:16px;height:26px"></div>
<div class="c ye" style="left:1876px;top:303px;width:19px;height:26px;line-height:25px">Plot</div>
<div class="c wh" style="left:1860px;top:303px;width:16px;height:26px"></div>
<div class="c ye" style="left:1876px;top:329px;width:19px;height:26px;line-height:25px">Plot</div>
<div class="c wh" style="left:1860px;top:329px;width:16px;height:26px"></div>
<div class="c ye" style="left:1876px;top:355px;width:19px;height:26px;line-height:25px">Plot</div>
<div class="c wh" style="left:1860px;top:355px;width:16px;height:26px"></div>
<div class="c ye" style="left:1876px;top:381px;width:19px;height:26px;line-height:25px">Plot</div>
<div class="c wh" style="left:1860px;top:381px;width:16px;height:26px"></div>
<div class="c ye" style="left:1876px;top:407px;width:19px;height:27px;line-height:26px">Plot</div>
<div class="c wh" style="left:1860px;top:407px;width:16px;height:27px"></div>
<div class="c ye" style="left:1876px;top:434px;width:19px;height:26px;line-height:25px">Plot</div>
<div class="c wh" style="left:1860px;top:434px;width:16px;height:26px"></div>
<div class="c ye" style="left:1876px;top:460px;width:19px;height:26px;line-height:25px">Plot</div>
<div class="c wh" style="left:1860px;top:460px;width:16px;height:26px"></div>
<div class="c ye" style="left:1876px;top:486px;width:19px;height:25px;line-height:24px"></div>
<div class="c ye" style="left:1860px;top:486px;width:16px;height:25px"></div>
<div class="a" style="left:1100px;top:937px;width:795px;height:38px;background:#e8e8ec;border-top:1px solid #c8c8d2"></div>
<div class="a" style="left:1100px;top:975px;width:795px;height:20px;background:#f4f4f6"></div>
<svg class="a" style="left:1107px;top:980px" width="5" height="9"><polygon points="5,0 5,9 0,4.500" fill="#8a8a96"/></svg>
<svg class="a" style="left:1882px;top:980px" width="5" height="9"><polygon points="0,0 0,9 5,4.500" fill="#8a8a96"/></svg>
<div class="sb" style="left:1121px;top:980px;width:339px"></div>
<div class="a" style="left:904px;top:255px;width:961px;height:525px;background:#c6c6ce;border:1px solid #a2a2ae"></div>
<div class="a" style="left:905px;top:256px;width:959px;height:32px;background:linear-gradient(#e2e2e7,#cfcfd6)"></div>
<svg class="a" style="left:914px;top:263px" width="17" height="16" viewBox="0 0 17 16"><rect x="8" y="1" width="8" height="8" fill="#f6c02a" stroke="#d9a520" stroke-width=".8"/><rect x="9" y="2" width="6" height="3" fill="#fbe28a"/><rect x="1" y="6" width="5" height="5" fill="#d63a2a" stroke="#a8281c" stroke-width=".8"/><rect x="2.500" y="7.500" width="1.500" height="2" fill="#f7c7c0"/><rect x="8" y="11" width="6" height="4" fill="#4f8fe0" stroke="#3a76cc" stroke-width=".8"/></svg>
<div class="t " style="left:937px;top:263px;font-weight:bold;color:#55555f;font-size:13.9px;line-height:18px">Select a finance party</div>
<div class="wbtn" style="left:1745px;top:263px;width:34px;height:18px"></div>
<div class="wbtn" style="left:1783px;top:263px;width:35px;height:18px"></div>
<div class="wbtn" style="left:1822px;top:263px;width:35px;height:18px"></div>
<div class="a" style="left:1757px;top:275px;width:11px;height:2px;background:#767682"></div>
<div class="a" style="left:1795px;top:268px;width:11px;height:8px;border:2px solid #767682"></div>
<svg class="a" style="left:1833px;top:268px" width="13" height="9" viewBox="0 0 13 9"><path d="M1.500 .5L11.500 8.500M11.500 .5L1.500 8.500" stroke="#767682" stroke-width="3"/></svg>
<div class="a" style="left:909px;top:288px;width:951px;height:486px;background:#d6d6dd;border:1px solid #a8a8b4"></div>
<div class="a" style="left:910px;top:289px;width:949px;height:27px;background:#c8c8d1"></div>
<div class="a" style="left:913px;top:289px;width:61px;height:28px;background:#fff;border:1px solid #b9b9c4;border-bottom:none;border-radius:3px 3px 0 0"></div>
<div class="t " style="left:926px;top:296px;color:#33334a">Home</div>
<div class="a" style="left:910px;top:316px;width:949px;height:114px;background:linear-gradient(#ffffff,#fbfbfc 40%,#efeff4);border-bottom:1px solid #b4b4c0"></div>
<div class="a" style="left:1029px;top:318px;width:1px;height:111px;background:linear-gradient(#f4f4f6,#c6c6d0 40%,#c6c6d0)"></div>
<div class="a" style="left:1129px;top:318px;width:1px;height:111px;background:linear-gradient(#f4f4f6,#c6c6d0 40%,#c6c6d0)"></div>
<div class="a" style="left:914px;top:406px;width:110px;height:1px;background:linear-gradient(90deg,#f4f4f6,#dcdce2 30%,#dcdce2 70%,#f4f4f6)"></div>
<div class="a" style="left:1036px;top:406px;width:88px;height:1px;background:linear-gradient(90deg,#f4f4f6,#dcdce2 30%,#dcdce2 70%,#f4f4f6)"></div>
<div class="t" style="left:839px;width:200px;text-align:center;top:368px;">Ok</div>
<div class="t" style="left:895px;width:200px;text-align:center;top:368px;">Back</div>
<div class="t" style="left:978px;width:200px;text-align:center;top:368px;">Save Layout</div>
<div class="t" style="left:861px;width:200px;text-align:center;top:410px;color:#9a9aa8">Process</div>
<div class="t" style="left:972px;width:200px;text-align:center;top:410px;color:#9a9aa8">Format</div>
<svg class="a" style="left:1019px;top:419px" width="6" height="6"><polygon points="6,0 6,6 0,6" fill="#a0a0ac"/></svg>
<svg class="a" style="left:1119px;top:419px" width="6" height="6"><polygon points="6,0 6,6 0,6" fill="#a0a0ac"/></svg>
<svg class="a" style="left:923px;top:325px" width="36" height="36" viewBox="0 0 36 36"><defs><radialGradient id="okg" cx=".4" cy=".3" r=".8"><stop offset="0" stop-color="#b4dc4c"/><stop offset="1" stop-color="#76ae22"/></radialGradient></defs><circle cx="17.500" cy="17.400" r="17" fill="url(#okg)" stroke="#6a9c22"/><path d="M5.500 17.500L9 14.500L14.500 21.500C18 15 23 10 28.500 6L30.500 8C25 13.500 20 20 16 27.500H13Z" fill="#f4f7fb" stroke="#5f9020" stroke-width=".9"/></svg>
<svg class="a" style="left:979px;top:325px" width="36" height="36" viewBox="0 0 36 36"><defs><radialGradient id="bk2" cx=".4" cy=".3" r=".8"><stop offset="0" stop-color="#b4dc4c"/><stop offset="1" stop-color="#76ae22"/></radialGradient></defs><circle cx="17.500" cy="17.400" r="17" fill="url(#bk2)" stroke="#6a9c22" stroke-width="1"/><path d="M7 17.400L19.400 8V14h6.300v6.500H19.400v6z" fill="#f4f7fb" stroke="#6a9c22" stroke-width="1"/></svg>
<svg class="a" style="left:1061px;top:324px" width="37" height="37" viewBox="0 0 37 37"><rect x=".5" y=".5" width="31" height="31" rx="2" fill="#eef1fa" stroke="#7a96d0"/><path d="M1 2.500a1.500 1.500 0 0 1 1.500-1.500h27a1.500 1.500 0 0 1 1.500 1.500V8.500H1z" fill="#69a3dc"/><path d="M1 15.500h30M1 22.500h30M10.500 1v30M20.500 1v30" stroke="#b4c2e4" stroke-width="1"/><g transform="translate(.8,1.500)"><path d="M20 20L31.500 31" stroke="#66748c" stroke-width="7" stroke-linecap="round"/><circle cx="17" cy="16.500" r="6.800" fill="#b6c2d4" stroke="#66748c" stroke-width="1.200"/><path d="M20 20L31.500 31" stroke="#b6c2d4" stroke-width="4.800" stroke-linecap="round"/><path d="M17.500 17.500L21.500 9L26 11.500Z" fill="#eef1fa"/><circle cx="18.500" cy="14.500" r="2.800" fill="#eef1fa" stroke="#66748c" stroke-width="1"/><path d="M19 12L22.500 8.500L26 12L21.500 16.500Z" fill="#eef1fa"/></g></svg>
<svg class="a" style="left:1833px;top:411px" width="15" height="11" viewBox="0 0 15 11"><path d="M7.500 1L14 7.500L11.800 9.800L7.500 5.500L3.200 9.800L1 7.500Z" fill="#f4f4f7" stroke="#5a5a66" stroke-width="1.300" stroke-linejoin="round"/></svg>
<div class="a" style="left:908px;top:315px;width:59px;height:91px;border:3px solid #4169e1"></div>
<div class="a" style="left:910px;top:434px;width:949px;height:339px;background:#fff;border:1px solid #b0b0bc"></div>
<div class="a" style="left:911px;top:435px;width:947px;height:41px;background:#ebebef;border-bottom:1px solid #c4c4ce"></div>
<svg class="a" style="left:1558px;top:435px" width="300" height="40" viewBox="0 0 300 40" preserveAspectRatio="none"><defs><linearGradient id="swa2" x1="0" y1="0" x2="1" y2="0"><stop offset="0" stop-color="#ecdcf0" stop-opacity="0"/><stop offset=".35" stop-color="#ecdcf0" stop-opacity=".45"/><stop offset=".6" stop-color="#e6d4ee" stop-opacity=".9"/><stop offset="1" stop-color="#e4def2"/></linearGradient><linearGradient id="swb2" x1="0" y1="1" x2="1" y2="0"><stop offset="0" stop-color="#cbbdee"/><stop offset=".45" stop-color="#c8b6ec"/><stop offset=".8" stop-color="#dcd3f1"/><stop offset="1" stop-color="#e2dcf3"/></linearGradient><filter id="swf2" x="-10%" y="-30%" width="120%" height="160%"><feGaussianBlur stdDeviation="2.200"/></filter></defs><rect width="300" height="40" fill="url(#swa2)"/><g filter="url(#swf2)"><path d="M126 42C150 26 170 10 190 -2H214C190 12 166 28 148 42Z" fill="#f0f0f4"/><path d="M148 42C170 24 196 8 216 -2H282C252 6 236 22 226 42Z" fill="url(#swb2)"/><path d="M226 42C238 22 254 6 282 -2H302V42Z" fill="#e3def3"/><path d="M234 42C256 28 280 16 302 10V14C282 22 262 32 248 42Z" fill="#d2c4ee" opacity=".8"/></g></svg>
<div class="t " style="left:917px;top:448px;color:#b4b4c0;letter-spacing:-.15px">Drag a column header here to group by that column</div>
<div class="hdr" style="left:911px;top:476px;width:20px;height:25px;line-height:23px;"></div>
<div class="hdr" style="left:931px;top:476px;width:94px;height:25px;line-height:23px;">SupplierCode</div>
<div class="hdr" style="left:1025px;top:476px;width:255px;height:25px;line-height:23px;">SupplierName</div>
<div class="hdr" style="left:1280px;top:476px;width:94px;height:25px;line-height:23px;">ContactName</div>
<div class="hdr" style="left:1374px;top:476px;width:94px;height:25px;line-height:23px;">SupplierType</div>
<div class="hdr" style="left:1468px;top:476px;width:93px;height:25px;line-height:23px;">Status</div>
<div class="hdr" style="left:1561px;top:476px;width:94px;height:25px;line-height:23px;">Class</div>
<div class="hdr" style="left:1655px;top:476px;width:94px;height:25px;line-height:23px;">VATNo</div>
<div class="hdr" style="left:1749px;top:476px;width:93px;height:25px;line-height:23px;">MinOrderAmt</div>
<div class="hdr" style="left:1842px;top:476px;width:16px;height:25px;line-height:23px;border-right:none;">Fr</div>
<svg class="a" style="left:1266px;top:480px" width="9" height="8" viewBox="0 0 9 8"><path d="M.5 .5h8L5.500 4v3.500h-2V4z" fill="#dfe8fa" stroke="#7f9fe0" stroke-width="1"/></svg>
<div class="c ind" style="left:911px;top:501px;width:20px;height:26px;"></div>
<div class="c cy" style="left:931px;top:501px;width:94px;height:26px;"></div>
<div class="c cy" style="left:1025px;top:501px;width:255px;height:26px;"></div>
<div class="c cy" style="left:1280px;top:501px;width:94px;height:26px;"></div>
<div class="c cy" style="left:1374px;top:501px;width:94px;height:26px;"></div>
<div class="c cy" style="left:1468px;top:501px;width:93px;height:26px;"></div>
<div class="c cy" style="left:1561px;top:501px;width:94px;height:26px;"></div>
<div class="c cy" style="left:1655px;top:501px;width:94px;height:26px;"></div>
<div class="c cy" style="left:1749px;top:501px;width:93px;height:26px;"></div>
<div class="c cy" style="left:1842px;top:501px;width:16px;height:26px;border-right:none;"></div>
<svg class="a" style="left:918px;top:510px" width="7" height="10" viewBox="0 0 7 10"><circle cx="3.500" cy="3" r="2.600" fill="#2a2a36"/><circle cx="2.700" cy="2.200" r="1" fill="#e8e8ee"/><rect x="3" y="5" width="1.200" height="5" fill="#2a2a36"/></svg>
<div class="abc" style="left:937px;top:510px">A<b>B</b>C</div>
<div class="abc" style="left:1031px;top:510px">A<b>B</b>C</div>
<div class="abc" style="left:1286px;top:510px">A<b>B</b>C</div>
<div class="abc" style="left:1380px;top:510px">A<b>B</b>C</div>
<div class="abc" style="left:1474px;top:510px">A<b>B</b>C</div>
<div class="abc" style="left:1567px;top:510px">A<b>B</b>C</div>
<div class="abc" style="left:1661px;top:510px">A<b>B</b>C</div>
<div class="a" style="left:1848px;top:506px;width:10px;height:18px;overflow:hidden"><div class="abc" style="left:0;top:4px">A<b>B</b>C</div></div>
<div class="eq" style="left:1759px;top:513px"></div>
<div class="t " style="left:1054px;top:506px;">fina</div>
<div class="a" style="left:911px;top:527px;width:947px;height:4px;background:#e6e6eb;border-bottom:1px solid #c8c8d2"></div>
<div class="c" style="left:911px;top:531px;width:20px;height:26px;line-height:27px;background:#f3f3f6;"></div>
<div class="c" style="left:931px;top:531px;width:94px;height:26px;line-height:27px;background:#e1e9fc;">OAF001</div>
<div class="c" style="left:1025px;top:531px;width:255px;height:26px;line-height:27px;background:#e1e9fc;"></div>
<div class="c" style="left:1280px;top:531px;width:94px;height:26px;line-height:27px;background:#e1e9fc;">Teddy Jones</div>
<div class="c" style="left:1374px;top:531px;width:94px;height:26px;line-height:27px;background:#e1e9fc;">FINH</div>
<div class="c" style="left:1468px;top:531px;width:93px;height:26px;line-height:27px;background:#e1e9fc;">A</div>
<div class="c" style="left:1561px;top:531px;width:94px;height:26px;line-height:27px;background:#e1e9fc;">PS</div>
<div class="c" style="left:1655px;top:531px;width:94px;height:26px;line-height:27px;background:#e1e9fc;">123456789</div>
<div class="c r" style="left:1749px;top:531px;width:93px;height:26px;line-height:27px;background:#e1e9fc;padding-right:5px;">0.00</div>
<div class="c" style="left:1842px;top:531px;width:16px;height:26px;line-height:27px;background:#e1e9fc;border-right:none;"></div>
<div class="a" style="left:1025px;top:531px;width:254px;height:26px;background:#fff;border:1px dotted #33334a"></div>
<div class="t " style="left:1030px;top:536px;letter-spacing:-.12px">Office Automation Financing</div>
<svg class="a" style="left:919px;top:540px" width="6" height="9" viewBox="0 0 6 9"><polygon points="0,0 6,4.500 0,9" fill="#1a1a24"/></svg>
<div class="a" style="left:908px;top:530px;width:24px;height:28px;border:3px solid #4169e1"></div>
<div class="a" style="left:911px;top:720px;width:947px;height:21px;background:#f2f2f5"></div>
<svg class="a" style="left:919px;top:726px" width="5" height="9"><polygon points="5,0 5,9 0,4.500" fill="#8a8a96"/></svg>
<svg class="a" style="left:1844px;top:726px" width="5" height="9"><polygon points="0,0 0,9 5,4.500" fill="#8a8a96"/></svg>
<div class="sb" style="left:932px;top:726px;width:528px"></div>
<div class="a" style="left:911px;top:741px;width:947px;height:31px;background:#ebebef;border-top:1px solid #c8c8d2"></div>
<svg class="a" style="left:920px;top:753px" width="12" height="10" viewBox="0 0 12 10"><path d="M1.500 1L10.500 9M10.500 1L1.500 9" stroke="#1a1a2c" stroke-width="2.800"/></svg>
<div class="a" style="left:941px;top:750px;width:16px;height:16px;background:#fff;border:1px solid #a4a4b0;box-shadow:inset 0 0 0 2px #e2e4ec"></div>
<svg class="a" style="left:943px;top:747px" width="16" height="17" viewBox="0 0 16 17"><path d="M2 9L5.500 14.500L13.500 1.500" fill="none" stroke="#1a1a24" stroke-width="1.800"/></svg>
<div class="t " style="left:962px;top:749px;letter-spacing:-.15px">Contains([SupplierName], 'fina')</div>
<div class="t " style="left:1792px;top:750px;">Edit Filter</div>
<svg class="a" style="left:0;top:0" width="1920" height="1030" viewBox="0 0 1920 1030"><g fill="#4169e1" stroke="none"><circle cx="727" cy="623.200" r="14.100"/><circle cx="845" cy="595.800" r="14.700"/><circle cx="849.900" cy="369" r="14.700"/><polygon points="722.800,677.500 733.400,677.500 728,692.800"/><polygon points="913.500,553.500 898.200,558.200 904.400,565.800"/><polygon points="907.400,358.200 891.200,357 893.400,366.200"/></g><g stroke="#4169e1" stroke-width="2.200" fill="none"><path d="M728 636V680"/><path d="M857 587.400L902.500 561.300"/><path d="M863 368.500L893.500 361.300"/></g><g fill="#fff" font-family="DejaVu Sans Condensed, Liberation Sans, sans-serif" font-size="13.500" text-anchor="middle"><text x="727" y="628">1</text><text x="845" y="600.500">2</text><text x="849.800" y="373.800">3</text></g></svg>
<div class="a" style="left:0px;top:997px;width:1920px;height:33px;background:linear-gradient(#e0e0e6,#dadae0 30%,#c9c9d0)"></div>
<div class="t " style="left:9px;top:1006px;color:#26263a">Open Windows</div>
<svg class="a" style="left:104px;top:1011px" width="8" height="5"><polygon points="0,0 8,0 4,5" fill="#2a2a3a"/></svg>
<div class="a" style="left:1472px;top:1003px;width:1px;height:24px;background:#c0c0ca"></div>
<div class="a" style="left:1473px;top:1003px;width:1px;height:24px;background:#ececf0"></div>
<div class="a" style="left:1574px;top:1003px;width:1px;height:24px;background:#c0c0ca"></div>
<div class="a" style="left:1575px;top:1003px;width:1px;height:24px;background:#ececf0"></div>
<div class="a" style="left:1666px;top:1003px;width:1px;height:24px;background:#c0c0ca"></div>
<div class="a" style="left:1667px;top:1003px;width:1px;height:24px;background:#ececf0"></div>
<div class="a" style="left:1788px;top:1003px;width:1px;height:24px;background:#c0c0ca"></div>
<div class="a" style="left:1789px;top:1003px;width:1px;height:24px;background:#ececf0"></div>
<div class="t " style="left:1484px;top:1006px;color:#26263a">User : Bianca</div>
<div class="t " style="left:1585px;top:1006px;color:#26263a">27/02/2023</div>
<div class="t " style="left:1676px;top:1006px;color:#26263a;letter-spacing:.2px">Version : 2.5.1.4</div>
<div class="t " style="left:1798px;top:1006px;color:#26263a;letter-spacing:-.25px">Example Company</div>
</body></html>
